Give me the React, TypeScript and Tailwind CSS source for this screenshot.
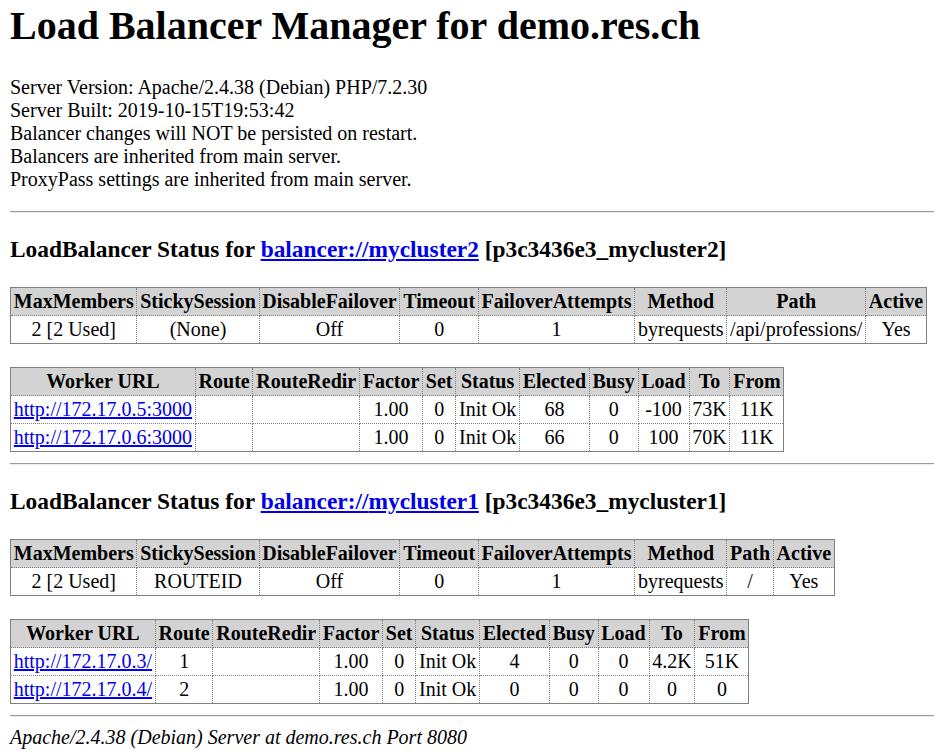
type Worker = {
  url: string
  route: string
  elected: string
  busy: string
  load: string
  to: string
  from: string
}

type Balancer = {
  name: string
  id: string
  sticky: string
  path: string
  workers: Worker[]
}

const balancers: Balancer[] = [
  {
    name: 'mycluster2',
    id: 'p3c3436e3_mycluster2',
    sticky: '(None)',
    path: '/api/professions/',
    workers: [
      { url: 'http://172.17.0.5:3000', route: '', elected: '68', busy: '0', load: '-100', to: '73K', from: '11K' },
      { url: 'http://172.17.0.6:3000', route: '', elected: '66', busy: '0', load: '100', to: '70K', from: '11K' },
    ],
  },
  {
    name: 'mycluster1',
    id: 'p3c3436e3_mycluster1',
    sticky: 'ROUTEID',
    path: '/',
    workers: [
      { url: 'http://172.17.0.3/', route: '1', elected: '4', busy: '0', load: '0', to: '4.2K', from: '51K' },
      { url: 'http://172.17.0.4/', route: '2', elected: '0', busy: '0', load: '0', to: '0', from: '0' },
    ],
  },
]

const th = 'border border-dotted border-[#808080] bg-[#d3d3d3] px-[2.75px] py-[2px] font-bold text-center'
const td = 'border border-dotted border-[#808080] bg-white px-[2.75px] py-[2px] text-center'
const table = 'border-collapse border border-solid border-[#808080] bg-white text-center'

function Rule() {
  return <hr className="-mr-[10px] h-[2px] border-0 border-t border-b border-t-[#9a9a9a] border-b-[#eeeeee]" />
}

function Section({ b }: { b: Balancer }) {
  return (
    <>
      <Rule />
      <h3 className="mt-[23px] text-[23.4px] font-bold leading-[normal]">
        LoadBalancer Status for{' '}
        <a href="#" className="text-[#0000ee] underline">balancer://{b.name}</a> [{b.id}]
      </h3>
      <table className={`${table} mt-[24px]`}>
        <tbody>
          <tr>
            {['MaxMembers', 'StickySession', 'DisableFailover', 'Timeout', 'FailoverAttempts', 'Method', 'Path', 'Active'].map((h) => (
              <th key={h} className={th}>{h}</th>
            ))}
          </tr>
          <tr>
            {['2 [2 Used]', b.sticky, 'Off', '0', '1', 'byrequests', b.path, 'Yes'].map((v, i) => (
              <td key={i} className={td}>{v}</td>
            ))}
          </tr>
        </tbody>
      </table>
      <table className={`${table} mt-[23px]`}>
        <tbody>
          <tr>
            {['Worker URL', 'Route', 'RouteRedir', 'Factor', 'Set', 'Status', 'Elected', 'Busy', 'Load', 'To', 'From'].map((h) => (
              <th key={h} className={th}>{h}</th>
            ))}
          </tr>
          {b.workers.map((w) => (
            <tr key={w.url}>
              <td className={`${td} !text-left`}>
                <a href="#" className="text-[#0000ee] underline">{w.url}</a>
              </td>
              <td className={td}>{w.route}</td>
              <td className={td}></td>
              <td className={td}>1.00</td>
              <td className={td}>0</td>
              <td className={td}>Init Ok</td>
              <td className={td}>{w.elected}</td>
              <td className={td}>{w.busy}</td>
              <td className={td}>{w.load}</td>
              <td className={td}>{w.to}</td>
              <td className={td}>{w.from}</td>
            </tr>
          ))}
        </tbody>
      </table>
      <div className="h-[11px]" />
    </>
  )
}

export default function App() {
  return (
    <div className="min-h-screen bg-white px-[10px] pt-[2px] font-['Liberation_Serif',serif] text-[20px] leading-[normal] text-black overflow-hidden">
      <h1 className="text-[40px] font-bold leading-[normal]">Load Balancer Manager for demo.res.ch</h1>
      <dl className="mt-[27px] mb-[20px]">
        <dt>Server Version: Apache/2.4.38 (Debian) PHP/7.2.30</dt>
        <dt>Server Built: 2019-10-15T19:53:42</dt>
        <dt>Balancer changes will NOT be persisted on restart.</dt>
        <dt>Balancers are inherited from main server.</dt>
        <dt>ProxyPass settings are inherited from main server.</dt>
      </dl>
      {balancers.map((b) => (
        <Section key={b.name} b={b} />
      ))}
      <Rule />
      <address className="mt-[9px] italic">Apache/2.4.38 (Debian) Server at demo.res.ch Port 8080</address>
    </div>
  )
}
